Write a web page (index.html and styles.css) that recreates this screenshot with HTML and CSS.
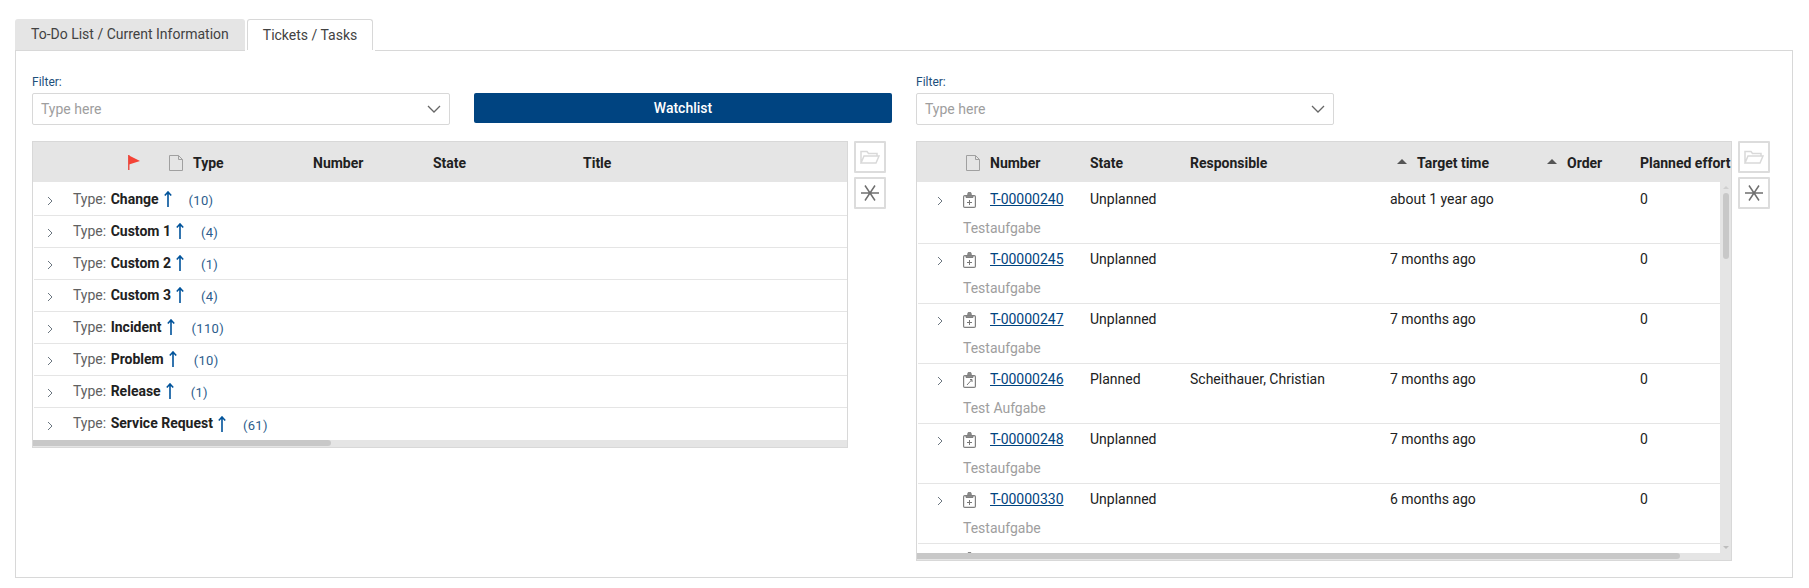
FILE: index.html
```html
<!DOCTYPE html>
<html lang="en">
<head>
    <meta charset="UTF-8">
    <title>Tickets / Tasks</title>
    <link rel="stylesheet" href="styles.css">
</head>
<body>
    <svg class="defs" width="0" height="0">
        <symbol id="chevron" viewBox="0 0 6 10"><path d="M1 1l4 4-4 4" fill="none" stroke="#6b7680" stroke-width="1"/></symbol>
        <symbol id="doc" viewBox="0 0 14 16"><path d="M.5.5h9l4 4v11H.5zM9.5.5v4h4" fill="none" stroke="#a0a0a0"/></symbol>
        <symbol id="arrow" viewBox="0 0 8 16"><path d="M4 16V1.500M.8 4.500L4 1l3.200 3.500" fill="none" stroke="#00539b" stroke-width="1.600"/></symbol>
        <symbol id="task-new" viewBox="0 0 13 16"><rect x=".6" y="3.600" width="11.800" height="11.800" rx="1.200" fill="none" stroke="#808080" stroke-width="1.200"/><path d="M3 3.500h7v2H3zM4.800 3.500V1.800a1.700 1.700 0 0 1 3.400 0v1.700" fill="#8c8c8c" stroke="#808080"/><path d="M6.500 8v5M4 10.500h5" stroke="#777" fill="none"/></symbol>
        <symbol id="task-edit" viewBox="0 0 13 16"><rect x=".6" y="3.600" width="11.800" height="11.800" rx="1.200" fill="none" stroke="#808080" stroke-width="1.200"/><path d="M3 3.500h7v2H3zM4.800 3.500V1.800a1.700 1.700 0 0 1 3.400 0v1.700" fill="#8c8c8c" stroke="#808080"/><path d="M4 13l4.500-5M7 7.500h2V10" stroke="#777" fill="none"/></symbol>
        <symbol id="folder" viewBox="0 0 20 14"><path d="M1 13V1.500h6l1.500 2H17v2.500M1 13l3-7h15l-3 7z" fill="none" stroke="#d9d9d9" stroke-width="1.500"/></symbol>
        <symbol id="star" viewBox="0 0 18 18"><path d="M0 9h18M4 1.500l10 15M14 1.500l-10 15" fill="none" stroke="#6f6f6f" stroke-width="1.500"/></symbol>
    </svg>

    <ul class="tabs">
        <li class="tab">To-Do List / Current Information</li>
        <li class="tab tab-active">Tickets / Tasks</li>
    </ul>

    <div class="panel">
        <!-- left side: grouped by type -->
        <section class="side">
            <div class="toolbar">
                <div class="filter">
                    <label class="filter-label">Filter:</label>
                    <div class="filter-input">
                        <span>Type here</span>
                        <svg class="filter-arrow" width="14" height="8" viewBox="0 0 14 8"><path d="M1 1l6 6 6-6" fill="none" stroke="#666" stroke-width="1.300"/></svg>
                    </div>
                </div>
                <button class="watchlist">Watchlist</button>
            </div>

            <div class="content">
                <div class="table table-left">
                    <div class="head head-left">
                        <span></span>
                        <svg class="flag" width="12" height="15" viewBox="0 0 12 15"><path d="M0 0h1.500v15H0z" fill="#e8534a"/><path d="M1 .5l11 5.500-11 3.500z" fill="#f44336"/></svg>
                        <svg class="doc" width="14" height="16"><use href="#doc"/></svg>
                        <span>Type</span>
                        <span>Number</span>
                        <span>State</span>
                        <span>Title</span>
                    </div>
                    <div class="body-left">
                        <div class="group">
                            <svg class="chevron" width="6" height="10"><use href="#chevron"/></svg>
                            <span class="group-label">Type: <b>Change</b></span>
                            <svg class="up" width="8" height="16"><use href="#arrow"/></svg>
                            <span class="count">(10)</span>
                        </div>
                        <div class="group">
                            <svg class="chevron" width="6" height="10"><use href="#chevron"/></svg>
                            <span class="group-label">Type: <b>Custom 1</b></span>
                            <svg class="up" width="8" height="16"><use href="#arrow"/></svg>
                            <span class="count">(4)</span>
                        </div>
                        <div class="group">
                            <svg class="chevron" width="6" height="10"><use href="#chevron"/></svg>
                            <span class="group-label">Type: <b>Custom 2</b></span>
                            <svg class="up" width="8" height="16"><use href="#arrow"/></svg>
                            <span class="count">(1)</span>
                        </div>
                        <div class="group">
                            <svg class="chevron" width="6" height="10"><use href="#chevron"/></svg>
                            <span class="group-label">Type: <b>Custom 3</b></span>
                            <svg class="up" width="8" height="16"><use href="#arrow"/></svg>
                            <span class="count">(4)</span>
                        </div>
                        <div class="group">
                            <svg class="chevron" width="6" height="10"><use href="#chevron"/></svg>
                            <span class="group-label">Type: <b>Incident</b></span>
                            <svg class="up" width="8" height="16"><use href="#arrow"/></svg>
                            <span class="count">(110)</span>
                        </div>
                        <div class="group">
                            <svg class="chevron" width="6" height="10"><use href="#chevron"/></svg>
                            <span class="group-label">Type: <b>Problem</b></span>
                            <svg class="up" width="8" height="16"><use href="#arrow"/></svg>
                            <span class="count">(10)</span>
                        </div>
                        <div class="group">
                            <svg class="chevron" width="6" height="10"><use href="#chevron"/></svg>
                            <span class="group-label">Type: <b>Release</b></span>
                            <svg class="up" width="8" height="16"><use href="#arrow"/></svg>
                            <span class="count">(1)</span>
                        </div>
                        <div class="group group-last">
                            <svg class="chevron" width="6" height="10"><use href="#chevron"/></svg>
                            <span class="group-label">Type: <b>Service Request</b></span>
                            <svg class="up" width="8" height="16"><use href="#arrow"/></svg>
                            <span class="count">(61)</span>
                        </div>
                    </div>
                    <div class="hscroll"><div class="hscroll-thumb thumb-left"></div></div>
                </div>
                <div class="tools">
                    <button class="tool"><svg width="20" height="14"><use href="#folder"/></svg></button>
                    <button class="tool"><svg width="18" height="18"><use href="#star"/></svg></button>
                </div>
            </div>
        </section>

        <!-- right side: ticket list -->
        <section class="side">
            <div class="toolbar">
                <div class="filter">
                    <label class="filter-label">Filter:</label>
                    <div class="filter-input">
                        <span>Type here</span>
                        <svg class="filter-arrow" width="14" height="8" viewBox="0 0 14 8"><path d="M1 1l6 6 6-6" fill="none" stroke="#666" stroke-width="1.300"/></svg>
                    </div>
                </div>
            </div>

            <div class="content">
                <div class="table table-right">
                    <div class="head head-right">
                        <span></span>
                        <svg class="doc doc-right" width="14" height="16"><use href="#doc"/></svg>
                        <span>Number</span>
                        <span>State</span>
                        <span>Responsible</span>
                        <span class="sorted"><i class="caret"></i>Target time</span>
                        <span class="sorted"><i class="caret"></i>Order</span>
                        <span class="clip">Planned effort</span>
                    </div>
                    <div class="body-right">
                        <div class="rows">
                            <div class="row">
                                <svg class="chevron" width="6" height="10"><use href="#chevron"/></svg>
                                <svg class="task" width="13" height="16"><use href="#task-new"/></svg>
                                <a class="ticket" href="#">T-00000240</a>
                                <span>Unplanned</span>
                                <span></span>
                                <span>about 1 year ago</span>
                                <span></span>
                                <span>0</span>
                                <span class="desc">Testaufgabe</span>
                            </div>
                            <div class="row">
                                <svg class="chevron" width="6" height="10"><use href="#chevron"/></svg>
                                <svg class="task" width="13" height="16"><use href="#task-new"/></svg>
                                <a class="ticket" href="#">T-00000245</a>
                                <span>Unplanned</span>
                                <span></span>
                                <span>7 months ago</span>
                                <span></span>
                                <span>0</span>
                                <span class="desc">Testaufgabe</span>
                            </div>
                            <div class="row">
                                <svg class="chevron" width="6" height="10"><use href="#chevron"/></svg>
                                <svg class="task" width="13" height="16"><use href="#task-new"/></svg>
                                <a class="ticket" href="#">T-00000247</a>
                                <span>Unplanned</span>
                                <span></span>
                                <span>7 months ago</span>
                                <span></span>
                                <span>0</span>
                                <span class="desc">Testaufgabe</span>
                            </div>
                            <div class="row">
                                <svg class="chevron" width="6" height="10"><use href="#chevron"/></svg>
                                <svg class="task" width="13" height="16"><use href="#task-edit"/></svg>
                                <a class="ticket" href="#">T-00000246</a>
                                <span>Planned</span>
                                <span>Scheithauer, Christian</span>
                                <span>7 months ago</span>
                                <span></span>
                                <span>0</span>
                                <span class="desc">Test Aufgabe</span>
                            </div>
                            <div class="row">
                                <svg class="chevron" width="6" height="10"><use href="#chevron"/></svg>
                                <svg class="task" width="13" height="16"><use href="#task-new"/></svg>
                                <a class="ticket" href="#">T-00000248</a>
                                <span>Unplanned</span>
                                <span></span>
                                <span>7 months ago</span>
                                <span></span>
                                <span>0</span>
                                <span class="desc">Testaufgabe</span>
                            </div>
                            <div class="row">
                                <svg class="chevron" width="6" height="10"><use href="#chevron"/></svg>
                                <svg class="task" width="13" height="16"><use href="#task-new"/></svg>
                                <a class="ticket" href="#">T-00000330</a>
                                <span>Unplanned</span>
                                <span></span>
                                <span>6 months ago</span>
                                <span></span>
                                <span>0</span>
                                <span class="desc">Testaufgabe</span>
                            </div>
                            <div class="row">
                                <svg class="chevron" width="6" height="10"><use href="#chevron"/></svg>
                                <svg class="task" width="13" height="16"><use href="#task-new"/></svg>
                            </div>
                        </div>
                        <div class="vscroll">
                            <i class="vscroll-up"></i>
                            <div class="vscroll-thumb"></div>
                            <i class="vscroll-down"></i>
                        </div>
                    </div>
                    <div class="hscroll"><div class="hscroll-thumb thumb-right"></div></div>
                </div>
                <div class="tools">
                    <button class="tool"><svg width="20" height="14"><use href="#folder"/></svg></button>
                    <button class="tool"><svg width="18" height="18"><use href="#star"/></svg></button>
                </div>
            </div>
        </section>
    </div>
</body>
</html>
```

FILE: styles.css
```css
* {
    margin: 0;
    padding: 0;
    box-sizing: border-box;
}

body {
    padding: 19px 16px 0 15px;
    background: #fff;
    font-family: Roboto, "Liberation Sans", sans-serif;
    font-size: 14px;
    line-height: 20px;
    color: #212121;
    overflow: hidden;
}

.defs {
    position: absolute;
}

svg {
    display: block;
    flex: none;
}

/* Tabs */
.tabs {
    display: flex;
    gap: 2px;
    list-style: none;
}

.tab {
    height: 31px;
    padding: 5px 16px 0;
    background: #e5e5e5;
    border-radius: 3px 3px 0 0;
    color: #424242;
}

.tab-active {
    position: relative;
    height: 32px;
    margin-bottom: -1px;
    padding: 5px 15px 0;
    background: #fff;
    border: 1px solid #d8d8d8;
    border-bottom: none;
}

.tab-active::after {
    content: '';
    position: absolute;
    left: -3px;
    right: -3px;
    bottom: 0;
    height: 1px;
    background: #fff;
}

.panel {
    display: grid;
    grid-template-columns: 860px 860px;
    gap: 24px;
    height: 528px;
    padding: 22px 16px 0;
    border: 1px solid #d8d8d8;
}

/* Filter row */
.toolbar {
    display: flex;
    align-items: flex-start;
    gap: 24px;
    height: 68px;
}

.filter {
    width: 418px;
}

.filter-label {
    display: block;
    height: 20px;
    padding-top: 1px;
    font-size: 12px;
    line-height: 16px;
    color: #1d4f7c;
}

.filter-input {
    display: flex;
    justify-content: space-between;
    align-items: center;
    height: 32px;
    padding: 0 8px;
    border: 1px solid #d8d8d8;
    border-radius: 2px;
    color: #9e9e9e;
}

.watchlist {
    width: 418px;
    height: 30px;
    margin-top: 20px;
    border: none;
    border-radius: 2px;
    background: #004481;
    color: #fff;
    font: 500 14px Roboto, sans-serif;
}

.content {
    display: flex;
    align-items: flex-start;
    gap: 6px;
}

/* Tables */
.table {
    width: 816px;
    border: 1px solid #d8d8d8;
    overflow: hidden;
}

.head {
    display: grid;
    align-items: center;
    height: 40px;
    padding-top: 1px;
    background: #e5e5e5;
    font-weight: 700;
    white-space: nowrap;
}

.head-left {
    grid-template-columns: 95px 41px 24px 120px 120px 150px 1fr;
}

.head-right {
    grid-template-columns: 46px 27px 100px 100px 200px 150px 100px minmax(0, 1fr);
}

.doc-right {
    margin-left: 3px;
}

.sorted {
    display: flex;
    align-items: center;
    padding-left: 7px;
}

.caret {
    width: 0;
    height: 0;
    margin: -3px 10px 0 0;
    border: 5px solid transparent;
    border-top: none;
    border-bottom-color: #555;
}

.clip {
    overflow: hidden;
}

.body-left {
    padding-top: 2px;
}

.group {
    display: flex;
    align-items: center;
    height: 32px;
    padding-left: 13px;
    margin-left: 1px;
    border-bottom: 1px solid #e5e5e5;
}

.group-last {
    border-bottom: none;
}

.group .chevron {
    margin-right: 20px;
    margin-top: 3px;
}

.group-label {
    margin-top: -2px;
    color: #616161;
}

.group-label b {
    margin-left: 1px;
    color: #212121;
    font-weight: 700;
}

.up {
    margin: -1px 17px 0 5px;
}

.count {
    margin-top: 3px;
    font-size: 13px;
    letter-spacing: .3px;
    color: #2b5c8c;
}

.hscroll {
    height: 7px;
    background: #e5e5e5;
}

.hscroll-thumb {
    height: 6px;
    background: #c8c8c8;
    border-radius: 0 3px 3px 0;
}

.thumb-left {
    width: 298px;
}

.thumb-right {
    width: 763px;
}

.table-right {
    width: 816px;
}

.body-right {
    display: flex;
    height: 371px;
    overflow: hidden;
}

.rows {
    flex: 1;
    padding-top: 2px;
    overflow: hidden;
}

.row {
    display: grid;
    grid-template-columns: 45px 27px 100px 100px 200px 150px 100px minmax(0, 1fr);
    grid-template-rows: 20px 20px;
    row-gap: 9px;
    height: 60px;
    padding-top: 5px;
    margin-left: 1px;
    border-bottom: 1px solid #e5e5e5;
}

.row .chevron {
    margin: 7px 0 0 19px;
}

.task {
    margin-top: 3px;
}

.ticket {
    color: #00447f;
}

.desc {
    grid-column: 2 / -1;
    color: #9e9e9e;
}

/* Vertical scrollbar */
.vscroll {
    display: flex;
    flex-direction: column;
    align-items: center;
    width: 11px;
    padding-top: 4px;
    background: #e5e5e5;
}

.vscroll-thumb {
    width: 6px;
    height: 66px;
    margin-top: 4px;
    background: #c8c8c8;
    border-radius: 3px;
}

.vscroll-up,
.vscroll-down {
    width: 0;
    height: 0;
    border: 3px solid transparent;
}

.vscroll-up {
    border-top: none;
    border-bottom: 3px solid #cfcfcf;
}

.vscroll-down {
    margin-top: auto;
    margin-bottom: 4px;
    border-bottom: none;
    border-top: 3px solid #bdbdbd;
}

/* Side buttons */
.tools {
    display: flex;
    flex-direction: column;
    gap: 4px;
}

.tool {
    display: flex;
    justify-content: center;
    align-items: center;
    width: 32px;
    height: 32px;
    background: #fff;
    border: 2px solid #dcdcdc;
    border-radius: 1px;
}
```
